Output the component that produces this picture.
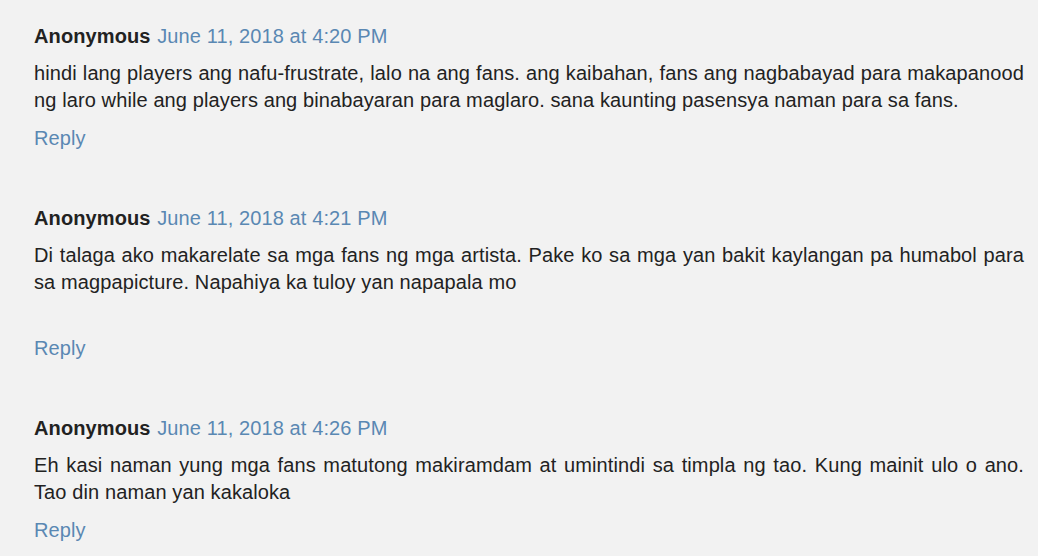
import React from 'react';

const comments = [
  {
    id: 1,
    author: 'Anonymous',
    date: 'June 11, 2018 at 4:20 PM',
    lines: [
      'hindi lang players ang nafu-frustrate, lalo na ang fans. ang kaibahan, fans ang nagbabayad para makapanood',
      'ng laro while ang players ang binabayaran para maglaro. sana kaunting pasensya naman para sa fans.',
    ],
  },
  {
    id: 2,
    author: 'Anonymous',
    date: 'June 11, 2018 at 4:21 PM',
    lines: [
      'Di talaga ako makarelate sa mga fans ng mga artista. Pake ko sa mga yan bakit kaylangan pa humabol para',
      'sa magpapicture. Napahiya ka tuloy yan napapala mo',
    ],
    trailingBreak: true,
  },
  {
    id: 3,
    author: 'Anonymous',
    date: 'June 11, 2018 at 4:26 PM',
    lines: [
      'Eh kasi naman yung mga fans matutong makiramdam at umintindi sa timpla ng tao. Kung mainit ulo o ano.',
      'Tao din naman yan kakaloka',
    ],
  },
];

const Comment = ({ comment }) => (
  <div className="mb-[53px]">
    <div className="leading-[27px]">
      <span className="font-bold text-[#222]">{comment.author}</span>{' '}
      <a href="#" className="ml-[1px] text-[#5a88b3]">{comment.date}</a>
    </div>
    <div className="mt-[10px] text-[#222] leading-[27px]">
      {comment.lines.map((line, i) => (
        <div
          key={i}
          className={i < comment.lines.length - 1 ? 'text-justify [text-align-last:justify]' : ''}
        >
          {line}
        </div>
      ))}
      {comment.trailingBreak && <div className="h-[28px]"></div>}
    </div>
    <div className="mt-[11px] leading-[27px]">
      <a href="#" className="text-[#5a88b3]">Reply</a>
    </div>
  </div>
);

export default function App() {
  return (
    <div
      className="w-[1038px] h-[556px] overflow-hidden bg-[#f2f2f2] pl-[34px] pr-[14px] pt-[23px] text-[20px] tracking-[0.11px]"
      style={{ fontFamily: '"Liberation Sans", Arial, sans-serif' }}
    >
      {comments.map((c) => (
        <Comment key={c.id} comment={c} />
      ))}
    </div>
  );
}
